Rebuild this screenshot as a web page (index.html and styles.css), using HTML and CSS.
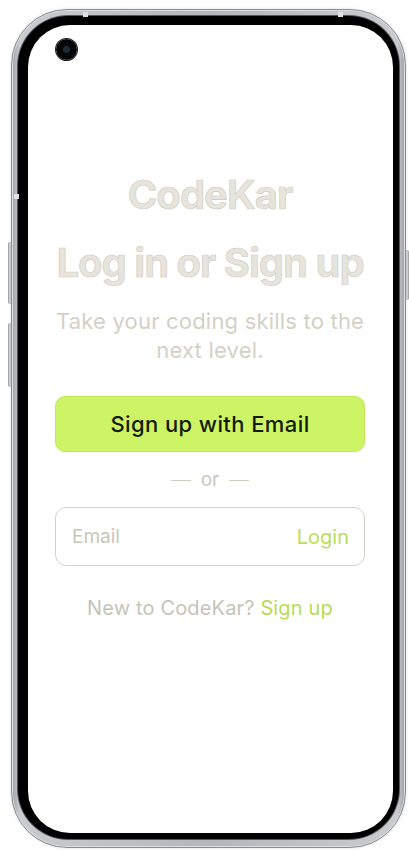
FILE: index.html
```html
<!DOCTYPE html>
<html lang="en">
<head>
<meta charset="utf-8">
<title>CodeKar</title>
<link rel="stylesheet" href="styles.css">
</head>
<body>
  <div class="phone">
    <span class="side-btn side-btn--vol-up"></span>
    <span class="side-btn side-btn--vol-down"></span>
    <span class="side-btn side-btn--power"></span>
    <span class="band band--top-left"></span>
    <span class="band band--top-right"></span>
    <span class="band band--left"></span>
    <div class="bezel">
      <div class="screen">
        <span class="camera"></span>
        <main class="auth">
          <h1 class="brand">CodeKar</h1>
          <h2 class="headline">Log in or Sign up</h2>
          <p class="tagline">Take your coding skills to the next level.</p>
          <button class="btn-primary" type="button">Sign up with Email</button>
          <div class="divider"><span class="dash"></span><span>or</span><span class="dash"></span></div>
          <div class="field">
            <span class="field-placeholder">Email</span>
            <span class="field-action">Login</span>
          </div>
          <p class="footer-note">New to CodeKar? <span class="link">Sign up</span></p>
        </main>
      </div>
    </div>
  </div>
</body>
</html>
```

FILE: styles.css
```css
* { box-sizing: border-box; }

html, body {
  margin: 0;
  padding: 0;
  background: #ffffff;
}

body {
  font-family: Inter, "Noto Sans", "Liberation Sans", sans-serif;
  padding: 9px 3px 3px 11px;
}

.phone {
  position: relative;
  width: 395px;
  height: 839px;
  padding: 6px 6px 8px 6px;
  border-radius: 56px;
  background: linear-gradient(90deg, #9ea1a6 0%, #c9cbcf 2%, #b3b6ba 50%, #c9cbcf 98%, #9ea1a6 100%);
  border: 1px solid #8a8d92;
  box-shadow: 0 0 3px rgba(0, 0, 0, 0.14), inset 0 0 0 1px #dcdee1;
}

.bezel {
  height: 100%;
  padding: 9px 6px 6px 10px;
  background: #000;
  border-radius: 50px;
  box-shadow: 0 0 0 1px #54575c;
}

.screen {
  position: relative;
  height: 100%;
  background: #ffffff;
  border-radius: 42px;
  overflow: hidden;
}

.camera {
  position: absolute;
  left: 28px;
  top: 14px;
  width: 21px;
  height: 21px;
  border-radius: 50%;
  background: radial-gradient(circle at 50% 50%, #1d2a3a 0 3px, #050608 4px 100%);
  box-shadow: 0 0 0 1px #222;
}

.side-btn {
  position: absolute;
  width: 3px;
  background: #c9cbce;
  border-left: 1px solid #a4a7ab;
  border-radius: 2px 0 0 2px;
}
.side-btn--vol-up { left: -4px; top: 232px; height: 62px; }
.side-btn--vol-down { left: -4px; top: 313px; height: 64px; }
.side-btn--power { right: -4px; top: 240px; height: 50px; border-left: 0; border-right: 1px solid #a4a7ab; border-radius: 0 2px 2px 0; }

.band {
  position: absolute;
  background: #dfe1e4;
  width: 5px;
  height: 5px;
}
.band--top-left { left: 71px; top: 2px; }
.band--top-right { left: 326px; top: 2px; }
.band--left { left: 2px; top: 184px; }

.auth {
  display: flex;
  flex-direction: column;
  align-items: center;
  padding: 146px 28px 0 27px;
  text-align: center;
}

.brand,
.headline {
  margin: 0;
  font-size: 40px;
  line-height: 48px;
  font-weight: 700;
  letter-spacing: -1px;
  color: #e6e4dc;
  -webkit-text-stroke: 0.6px #cfccc2;
}

.headline {
  margin-top: 20px;
}

.tagline {
  margin: 20px -4px 0;
  font-size: 22px;
  line-height: 29px;
  font-weight: 400;
  letter-spacing: 0.2px;
  color: #d3d1c6;
}

.btn-primary {
  margin-top: 31px;
  width: 100%;
  height: 56px;
  border: 1px solid #c2e85a;
  border-radius: 10px;
  background: #cdf464;
  color: #141a08;
  font-family: inherit;
  font-size: 22px;
  font-weight: 500;
  letter-spacing: 0.4px;
}

.divider {
  margin-top: 16px;
  display: flex;
  align-items: center;
  gap: 10px;
  font-size: 19px;
  line-height: 24px;
  color: #cac8bc;
}

.dash {
  width: 20px;
  height: 1px;
  background: #cfcdc2;
}

.field {
  margin-top: 15px;
  width: 100%;
  height: 59px;
  border: 1px solid #d5d3c7;
  border-radius: 11px;
  display: flex;
  align-items: center;
  justify-content: space-between;
  padding: 0 15px 0 16px;
  font-size: 19px;
}

.field-placeholder {
  color: #c8c6ba;
}

.field-action {
  color: #b8de5a;
  font-size: 20px;
}

.footer-note {
  margin: 30px 0 0;
  font-size: 20px;
  line-height: 24px;
  letter-spacing: 0.15px;
  color: #c6c4b8;
}

.link {
  color: #b6dc55;
}
```
